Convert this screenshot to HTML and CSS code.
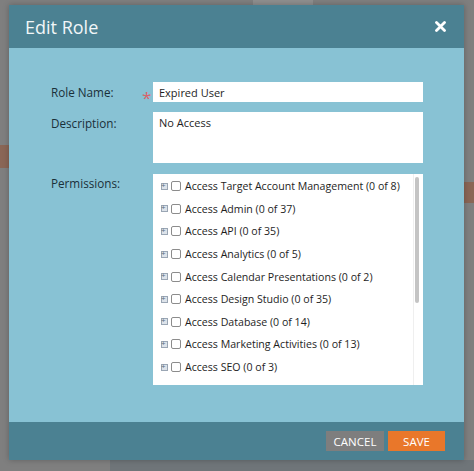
FILE: index.html
```html
<!DOCTYPE html>
<html lang="en">
<head>
    <meta charset="UTF-8">
    <meta name="viewport" content="width=device-width, initial-scale=1.0">
    <title>Edit Role</title>
    <link rel="stylesheet" href="styles.css">
</head>
<body>
    <!-- page underneath the modal, dimmed -->
    <div class="backdrop">
        <div class="bg-tab"></div>
        <div class="bg-flag bg-flag-left"></div>
        <div class="bg-flag bg-flag-right"></div>
        <div class="bg-bottom"></div>
    </div>

    <div class="dialog">
        <div class="dialog-header">
            <h1>Edit Role</h1>
            <svg class="close" width="11" height="11" viewBox="0 0 11 11">
                <path d="M1.5 1.5 L9.5 9.5 M9.5 1.5 L1.5 9.5" stroke="#ffffff" stroke-width="2.8" stroke-linecap="round"/>
            </svg>
        </div>

        <div class="dialog-body">
            <label class="field-label label-name">Role Name:</label>
            <span class="required">*</span>
            <input class="text-input" type="text" value="Expired User">

            <label class="field-label label-desc">Description:</label>
            <span></span>
            <textarea class="text-area">No Access</textarea>

            <label class="field-label label-perm">Permissions:</label>
            <span></span>
            <div class="perm-box">
                <ul class="perm-list">
                    <li><span class="expand"></span><span class="check"></span>Access Target Account Management (0 of 8)</li>
                    <li><span class="expand"></span><span class="check"></span>Access Admin (0 of 37)</li>
                    <li><span class="expand"></span><span class="check"></span>Access API (0 of 35)</li>
                    <li><span class="expand"></span><span class="check"></span>Access Analytics (0 of 5)</li>
                    <li><span class="expand"></span><span class="check"></span>Access Calendar Presentations (0 of 2)</li>
                    <li><span class="expand"></span><span class="check"></span>Access Design Studio (0 of 35)</li>
                    <li><span class="expand"></span><span class="check"></span>Access Database (0 of 14)</li>
                    <li><span class="expand"></span><span class="check"></span>Access Marketing Activities (0 of 13)</li>
                    <li><span class="expand"></span><span class="check"></span>Access SEO (0 of 3)</li>
                    <li><span class="expand"></span><span class="check"></span></li>
                </ul>
                <div class="scrollbar"><div class="thumb"></div></div>
            </div>
        </div>

        <div class="dialog-footer">
            <button class="btn btn-cancel">CANCEL</button>
            <button class="btn btn-save">SAVE</button>
        </div>
    </div>
</body>
</html>
```

FILE: styles.css
```css
html, body {
    margin: 0;
    height: 100%;
}
body {
    font-family: "Open Sans", "Liberation Sans", sans-serif;
    background-color: #7f7f7f;
    position: relative;
    overflow: hidden;
}

/* dimmed page behind the modal */
.backdrop {
    position: absolute;
    inset: 0;
}
.bg-tab {
    position: absolute;
    left: 253px;
    top: 0;
    width: 60px;
    height: 6px;
    background-color: #8f8f8f;
}
.bg-flag {
    position: absolute;
    background-color: #8a6656;
}
.bg-flag-left {
    left: 0;
    top: 145px;
    width: 9px;
    height: 23px;
}
.bg-flag-right {
    left: 464px;
    top: 182px;
    width: 10px;
    height: 21px;
}
.bg-bottom {
    position: absolute;
    left: 110px;
    right: 0;
    top: 460px;
    bottom: 0;
    background-color: #6f7579;
}

.dialog {
    position: absolute;
    left: 9px;
    top: 5px;
    width: 455px;
    box-shadow: 0 0 6px rgba(0, 0, 0, 0.25);
}
.dialog-header {
    background-color: #4b8192;
    height: 43px;
    display: flex;
    align-items: center;
    justify-content: space-between;
    padding: 0 18px 0 16px;
}
.dialog-header h1 {
    margin: 0;
    font-size: 18px;
    font-weight: 400;
    color: #f1f6f8;
}
.close {
    display: block;
}

.dialog-body {
    background-color: #88c2d4;
    height: 340px;
    padding: 34px 41px 0 42px;
    display: grid;
    grid-template-columns: 92px 10px 1fr;
    grid-template-rows: 20px 51px 212px;
    row-gap: 10px;
}
.field-label {
    font-size: 11.7px;
    color: #1a3039;
}
.label-name {
    line-height: 20px;
}
.label-desc {
    padding-top: 3px;
}
.label-perm {
    padding-top: 2px;
}
.required {
    color: #d9626a;
    font-size: 17px;
    line-height: 20px;
    padding-top: 6px;
    margin-left: -1px;
}
.text-input, .text-area {
    border: none;
    margin: 0;
    background-color: #ffffff;
    font-family: inherit;
    font-size: 11px;
    color: #1e1e1e;
    padding: 0 6px;
    box-sizing: border-box;
    width: 100%;
}
.text-input {
    height: 20px;
}
.text-area {
    height: 51px;
    padding-top: 3px;
    resize: none;
}
.perm-box {
    background-color: #ffffff;
    display: flex;
    overflow: hidden;
    margin-top: 1px;
}
.perm-list {
    list-style: none;
    margin: 0;
    padding: 1px 0 0 8px;
    flex: 1;
}
.perm-list li {
    height: 22.6px;
    display: flex;
    align-items: center;
    font-size: 10.6px;
    color: #1e1e1e;
    white-space: nowrap;
}
.expand {
    width: 5px;
    height: 5px;
    border: 1px solid #9aa6b4;
    background-color: #dde3ea;
    margin-right: 3px;
    position: relative;
}
.expand::after {
    content: "+";
    position: absolute;
    left: -1px;
    top: -5px;
    font-size: 8px;
    color: #5b6a7c;
}
.check {
    width: 8px;
    height: 8px;
    border: 1px solid #8c8c8c;
    border-radius: 2px;
    margin-right: 4px;
    background-color: #ffffff;
}
.scrollbar {
    width: 8px;
    border-left: 1px solid #efefef;
    padding: 3px 0 0 1px;
    box-sizing: border-box;
    margin-right: 2px;
}
.thumb {
    width: 4px;
    height: 126px;
    border-radius: 2px;
    background-color: #c4c4c4;
}

.dialog-footer {
    background-color: #4b8192;
    height: 38px;
    display: flex;
    justify-content: flex-end;
    align-items: center;
    gap: 4px;
    padding-right: 19px;
}
.btn {
    border: none;
    height: 20px;
    font-family: inherit;
    font-size: 11.5px;
    color: #ffffff;
    padding: 0;
}
.btn-cancel {
    width: 58px;
    background-color: #7e7e7e;
}
.btn-save {
    width: 57px;
    background-color: #e9772a;
}
```
